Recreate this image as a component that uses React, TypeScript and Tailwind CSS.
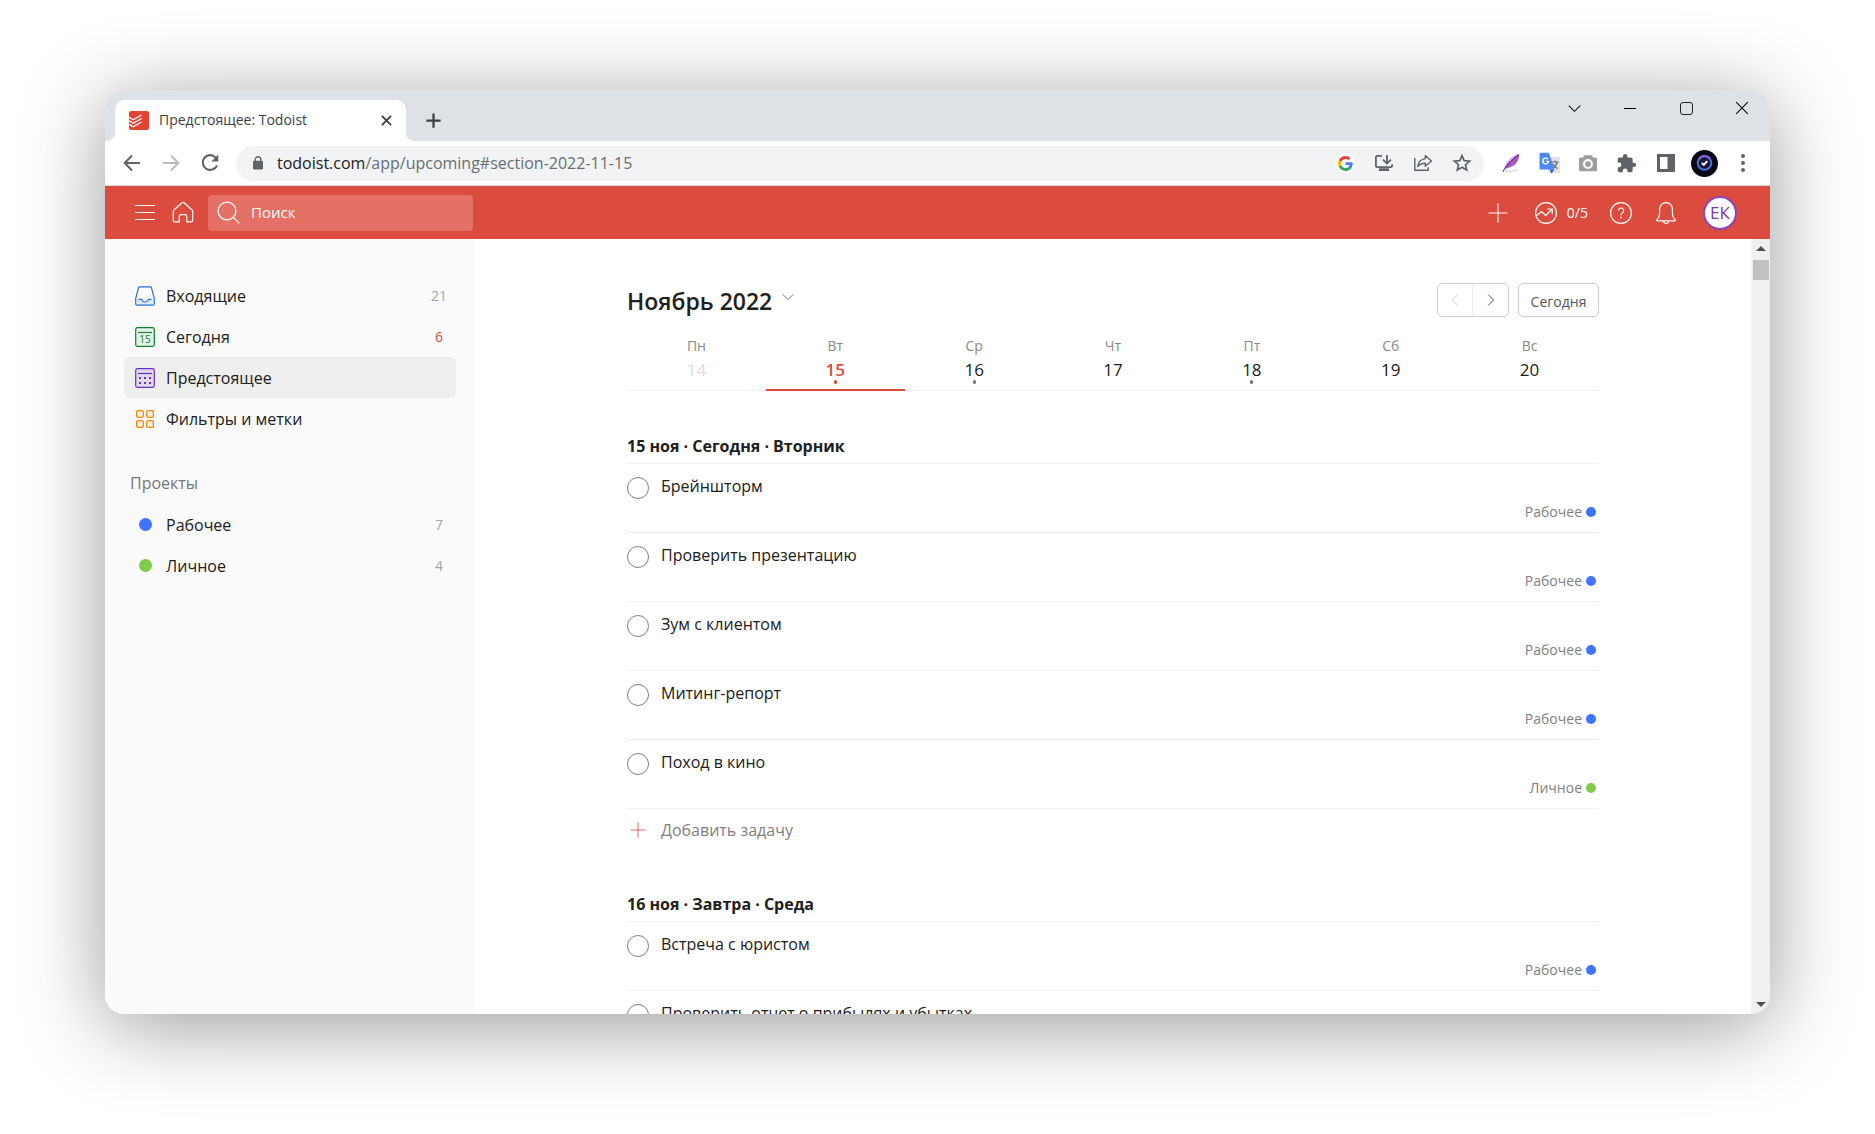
import React from "react";

type IconProps = { className?: string };

const projects = {
  work: { name: "Рабочее", color: "bg-[#4073ff]", count: 7 },
  personal: { name: "Личное", color: "bg-[#7ecc49]", count: 4 },
};

type ProjectKey = keyof typeof projects;
type Task = { title: string; project: ProjectKey };

const days = [
  { name: "Пн", date: 14, state: "past", dot: false },
  { name: "Вт", date: 15, state: "today", dot: true },
  { name: "Ср", date: 16, state: "future", dot: true },
  { name: "Чт", date: 17, state: "future", dot: false },
  { name: "Пт", date: 18, state: "future", dot: true },
  { name: "Сб", date: 19, state: "future", dot: false },
  { name: "Вс", date: 20, state: "future", dot: false },
];

const sections: { title: string; tasks: Task[] }[] = [
  {
    title: "15 ноя · Сегодня · Вторник",
    tasks: [
      { title: "Брейншторм", project: "work" },
      { title: "Проверить презентацию", project: "work" },
      { title: "Зум с клиентом", project: "work" },
      { title: "Митинг-репорт", project: "work" },
      { title: "Поход в кино", project: "personal" },
    ],
  },
  {
    title: "16 ноя · Завтра · Среда",
    tasks: [
      { title: "Встреча с юристом", project: "work" },
      { title: "Проверить отчет о прибылях и убытках", project: "work" },
    ],
  },
];

/* ---------- browser icons ---------- */

function Favicon() {
  return (
    <svg className="size-5 shrink-0" viewBox="0 0 20 20" aria-hidden="true">
      <rect width="20" height="19" rx="2" fill="#e44332" />
      <g fill="none" stroke="#fff" strokeWidth="1.3">
        <path d="M0 6.2 4.3 8.7 12.6 4" />
        <path d="M0 9.7 4.3 12.2 12.6 7.5" />
        <path d="M0 13.2 4.3 15.7 12.6 11" />
      </g>
    </svg>
  );
}

function CrossIcon({ className }: IconProps) {
  return (
    <svg className={className} viewBox="0 0 12 12" fill="none" stroke="currentColor" aria-hidden="true">
      <path d="m1 1 10 10M11 1 1 11" />
    </svg>
  );
}

function BackIcon({ className }: IconProps) {
  return (
    <svg className={className} viewBox="0 0 20 20" fill="none" stroke="currentColor" strokeWidth="2" aria-hidden="true">
      <path d="M18 10H3M10 2.5 2.7 10l7.3 7.5" />
    </svg>
  );
}

function ReloadIcon() {
  return (
    <svg className="size-5" viewBox="0 0 20 20" aria-hidden="true">
      <path d="M15.7 4.6A7.4 7.4 0 1 0 17 12.3" fill="none" stroke="#5f6368" strokeWidth="2.1" />
      <path d="M18.3 1.5v7h-7z" fill="#5f6368" />
    </svg>
  );
}

function LockIcon() {
  return (
    <svg className="h-[14px] w-3 shrink-0" viewBox="0 0 12 14" aria-hidden="true">
      <rect x="1" y="4.8" width="10" height="8.7" rx="1.2" fill="#5f6368" />
      <path d="M3.2 5V3.6a2.8 2.8 0 0 1 5.6 0V5" fill="none" stroke="#5f6368" strokeWidth="1.4" />
    </svg>
  );
}

function GoogleIcon() {
  return (
    <svg className="size-[15px]" viewBox="0 0 48 48" aria-hidden="true">
      <path fill="#EA4335" d="M24 9.5c3.54 0 6.71 1.22 9.21 3.6l6.85-6.85C35.9 2.38 30.47 0 24 0 14.62 0 6.51 5.38 2.56 13.22l7.98 6.19C12.43 13.72 17.74 9.5 24 9.5z" />
      <path fill="#4285F4" d="M46.98 24.55c0-1.57-.15-3.09-.38-4.55H24v9.02h12.94c-.58 2.96-2.26 5.48-4.78 7.18l7.73 6c4.51-4.18 7.09-10.36 7.09-17.65z" />
      <path fill="#FBBC05" d="M10.53 28.59c-.48-1.45-.76-2.99-.76-4.59s.27-3.14.76-4.59l-7.98-6.19C.92 16.46 0 20.12 0 24c0 3.88.92 7.54 2.56 10.78l7.97-6.19z" />
      <path fill="#34A853" d="M24 48c6.48 0 11.93-2.13 15.89-5.81l-7.73-6c-2.15 1.45-4.92 2.3-8.16 2.3-6.26 0-11.57-4.22-13.47-9.91l-7.98 6.19C6.51 42.62 14.62 48 24 48z" />
    </svg>
  );
}

function InstallIcon() {
  return (
    <svg className="size-5" viewBox="0 0 20 20" fill="none" stroke="#5f6368" strokeWidth="1.8" aria-hidden="true">
      <path d="M8 2.9H3.2a1.3 1.3 0 0 0-1.3 1.3v8.6c0 .7.6 1.3 1.3 1.3h13.6c.7 0 1.3-.6 1.3-1.3v-1.5" />
      <path d="M13 2v8M9 6.6l4 4 4-4" />
      <path d="M5 16.6h10" strokeWidth="2.6" />
    </svg>
  );
}

function ShareIcon() {
  return (
    <svg className="size-5" viewBox="0 0 20 20" fill="none" stroke="#5f6368" strokeWidth="1.4" aria-hidden="true">
      <path d="M1.8 5v12.2h13.4v-3" />
      <path d="M12.3 2.6 18.4 8l-6.1 5.3v-3.1c-3.3-.1-5.7 1-7.6 3.4.6-4.5 3.2-7.4 7.6-8z" strokeLinejoin="round" />
    </svg>
  );
}

function StarIcon() {
  return (
    <svg className="size-5" viewBox="0 0 20 20" fill="none" stroke="#5f6368" strokeWidth="1.7" aria-hidden="true">
      <path d="m10 2.6 2.2 5 5.4.5-4.1 3.6 1.2 5.3-4.7-2.8L5.3 17l1.2-5.3-4.1-3.6 5.4-.5z" />
    </svg>
  );
}

function FeatherIcon() {
  return (
    <svg className="size-5" viewBox="0 0 20 20" aria-hidden="true">
      <path d="M5 18.6c4 0 8-.6 11-1.6" stroke="#d4d0d8" strokeWidth="1.2" fill="none" />
      <path d="M18.2.8c.3 4.200-1.400 8-4.200 10.700-2.600 2.400-6.600 2.900-9.400 4.400C5.600 9.400 11.800 4.200 18.200.8z" fill="#a45bc0" />
      <path d="M18.2.8C13 4 8 8.600 5.500 13.600L3.600 16.600C3.900 8.600 10.200 3 18.200.8z" fill="#d9b5e4" />
      <path d="M1.800 18.800C5 12.700 10.400 7 17.600 1.800" stroke="#7a2c9c" strokeWidth="1.1" fill="none" />
    </svg>
  );
}

function TranslateIcon() {
  return (
    <svg className="size-[22px] shrink-0" viewBox="0 0 22 22" aria-hidden="true">
      <rect x="9" y="5" width="12" height="16" rx="1" fill="#e1e3e6" />
      <path d="M12.500 10h7M16 8.500V10M18.300 10c-.6 2.600-2.600 5-4.800 6.500M14 12c1 2 2.600 3.800 4.600 4.600" stroke="#6b7077" strokeWidth="1.2" fill="none" />
      <path d="M10.500 17.500h5l-3 4z" fill="#2f5fc4" />
      <path d="M1.500.8H10l5.500 16.700h-14a1 1 0 0 1-1-1V1.800a1 1 0 0 1 1-1z" fill="#4a8af4" />
      <path d="M9 7.200A2.900 2.900 0 1 0 9.600 9.400H6.900" fill="none" stroke="#fff" strokeWidth="1.4" />
    </svg>
  );
}

function CameraIcon() {
  return (
    <svg className="size-5" viewBox="0 0 20 20" aria-hidden="true">
      <path d="M2.500 4.500H5l1-2.300h8l1 2.300h2.500c.8 0 1.500.6 1.500 1.400v11c0 .8-.7 1.400-1.500 1.400h-15A1.500 1.500 0 0 1 1 16.900v-11c0-.8.7-1.400 1.500-1.400z" fill="#9e9e9e" />
      <circle cx="10" cy="11" r="3.9" fill="none" stroke="#fff" strokeWidth="2.1" />
    </svg>
  );
}

function PuzzleIcon() {
  return (
    <svg className="size-[21px]" viewBox="0 0 24 24" fill="#5f6368" aria-hidden="true">
      <path d="M20.500 11H19V7c0-1.100-.9-2-2-2h-4V3.500a2.500 2.500 0 0 0-5 0V5H4c-1.100 0-2 .9-2 2v3.800h1.500a2.700 2.700 0 0 1 0 5.400H2V20c0 1.100.9 2 2 2h3.800v-1.500a2.700 2.700 0 0 1 5.400 0V22H17c1.100 0 2-.9 2-2v-4h1.500a2.500 2.500 0 0 0 0-5z" />
    </svg>
  );
}

function SidePanelIcon() {
  return (
    <svg className="size-[18px]" viewBox="0 0 18 18" aria-hidden="true">
      <path d="M0 0h18v18H0zM3 3v12h7.500V3z" fill="#5f6368" fillRule="evenodd" />
    </svg>
  );
}

function ProfileIcon() {
  return (
    <svg className="size-[27px] shrink-0" viewBox="0 0 27 27" aria-hidden="true">
      <circle cx="13.500" cy="13.500" r="13.500" fill="#0b0816" />
      <circle cx="13.500" cy="13" r="6.800" fill="#14163a" stroke="#4b6fd6" strokeWidth="2" />
      <path d="M7.500 10a6.800 6.800 0 0 1 11.500-1.500" fill="none" stroke="#8a5fd0" strokeWidth="2" />
      <path d="m10.800 13 2 1.900 3.500-3.700" fill="none" stroke="#fff" strokeWidth="1.9" />
    </svg>
  );
}

/* ---------- app icons ---------- */

function HomeIcon() {
  return (
    <svg className="size-6" viewBox="0 0 24 24" fill="none" stroke="#fff" strokeWidth="1.2" strokeLinejoin="round" aria-hidden="true">
      <path d="M2.300 10.200v9c0 .9.7 1.600 1.600 1.600h4.300v-5.400c0-1 .8-1.800 1.800-1.800h4c1 0 1.800.8 1.800 1.800v5.400h4.300c.9 0 1.600-.7 1.600-1.600v-9c0-.5-.2-.9-.6-1.200L13 1.700a1.500 1.500 0 0 0-2 0L2.900 9c-.4.300-.6.700-.6 1.200z" />
    </svg>
  );
}

function SearchIcon() {
  return (
    <svg className="size-6 shrink-0" viewBox="0 0 24 24" fill="none" stroke="#fff" strokeWidth="1.2" aria-hidden="true">
      <circle cx="11" cy="10" r="8.9" />
      <path d="m17.300 16.300 6 6" />
    </svg>
  );
}

function PlusIcon({ className }: IconProps) {
  return (
    <svg className={className} viewBox="0 0 20 20" fill="none" stroke="currentColor" aria-hidden="true">
      <path d="M10 .5v19M.5 10h19" />
    </svg>
  );
}

function ProductivityIcon() {
  return (
    <svg className="size-6" viewBox="0 0 24 24" fill="none" stroke="#fff" strokeWidth="1.2" aria-hidden="true">
      <circle cx="12" cy="12" r="10.4" />
      <path d="m2.200 14.800 5.300-4.300 4.200 4 6-6" strokeLinejoin="round" />
      <path d="M13.300 8h4.900v4.900" />
    </svg>
  );
}

function HelpIcon() {
  return (
    <svg className="size-6" viewBox="0 0 24 24" fill="none" stroke="#fff" strokeWidth="1.2" aria-hidden="true">
      <circle cx="12" cy="12" r="10.4" />
      <path d="M9.400 9.600a2.600 2.600 0 1 1 4.300 2c-.9.800-1.700 1.300-1.700 2.700" />
      <path d="M12 15.800v1.600" strokeWidth="1.4" />
    </svg>
  );
}

function BellIcon() {
  return (
    <svg className="size-6" viewBox="0 0 24 24" fill="none" stroke="#fff" strokeWidth="1.2" strokeLinejoin="round" aria-hidden="true">
      <path d="M12 1.700c-4 0-6.400 2.900-6.400 6.600v4.200c0 2.900-1 4.600-2.700 6.200-.5.500-.3 1.200.4 1.200h17.400c.7 0 .9-.7.4-1.200-1.700-1.600-2.700-3.300-2.700-6.200V8.300c0-3.700-2.400-6.600-6.400-6.600z" />
      <path d="M9.400 20c.1 1.600 1.200 2.500 2.600 2.500s2.500-.9 2.600-2.500" />
    </svg>
  );
}

function InboxIcon() {
  return (
    <svg className="size-5" viewBox="0 0 20 20" fill="none" stroke="#246fe0" strokeWidth="1.2" strokeLinejoin="round" aria-hidden="true">
      <path d="M1.500 13.400h4.400c.4 1.700 2 2.700 4.100 2.700s3.700-1 4.100-2.700h4.400v4.500a1 1 0 0 1-1 1h-15a1 1 0 0 1-1-1z" fill="#246fe0" fillOpacity=".12" stroke="none" />
      <path d="M4.900.8h10.200c.7 0 1.200.4 1.400 1l2.800 10.600v5.300c0 .9-.6 1.500-1.500 1.500H2.200c-.9 0-1.500-.6-1.500-1.500v-5.300L3.500 1.800c.2-.6.700-1 1.400-1z" />
      <path d="M3.500 13.400h3.200c.5 1.700 1.700 2.600 3.300 2.600s2.800-.9 3.300-2.600h3.200" />
    </svg>
  );
}

function TodayIcon() {
  return (
    <svg className="size-5" viewBox="0 0 20 20" fill="none" stroke="#058527" strokeWidth="1.2" aria-hidden="true">
      <rect x=".7" y=".7" width="18.6" height="18.6" rx="1.8" fill="#058527" fillOpacity=".08" />
      <path d="M3 5.500h14" />
      <text x="10" y="16" textAnchor="middle" fontSize="10" fill="#058527" stroke="none">
        15
      </text>
    </svg>
  );
}

function UpcomingIcon() {
  return (
    <svg className="size-5" viewBox="0 0 20 20" fill="none" stroke="#692fc2" strokeWidth="1.2" aria-hidden="true">
      <rect x=".7" y=".7" width="18.6" height="18.6" rx="1.8" fill="#692fc2" fillOpacity=".1" />
      <path d="M3 5.500h14" />
      <path d="M4 10h2M9 10h2M14 10h2M4 15h2M9 15h2M14 15h2" strokeWidth="2" />
    </svg>
  );
}

function FiltersIcon() {
  return (
    <svg className="size-5" viewBox="0 0 20 20" stroke="#eb8909" strokeWidth="1.2" fill="#eb8909" fillOpacity=".12" aria-hidden="true">
      <rect x="1.600" y="1.600" width="6.800" height="6.800" rx="1.600" />
      <rect x="11.600" y="1.600" width="6.800" height="6.800" rx="1.600" />
      <rect x="1.600" y="11.600" width="6.800" height="6.800" rx="1.600" />
      <rect x="11.600" y="11.600" width="6.800" height="6.800" rx="1.600" />
    </svg>
  );
}

function Chevron({ className }: IconProps) {
  return (
    <svg className={className} viewBox="0 0 12 12" fill="none" stroke="currentColor" aria-hidden="true">
      <path d="m.7 3.300 5.300 5.300 5.300-5.300" />
    </svg>
  );
}

/* ---------- browser chrome ---------- */

function TabStrip() {
  return (
    <div className="flex h-[51px] shrink-0 items-start justify-between bg-[#dee1e6]">
      <div className="flex items-end pt-[10px] pl-[2px]">
        <span className="size-2 bg-white">
          <span className="block size-2 rounded-br-full bg-[#dee1e6]" />
        </span>
        <div className="flex h-[41px] w-[291px] items-center rounded-t-[10px] bg-white pr-3 pl-[14px]">
          <Favicon />
          <span className="mb-[2px] ml-[10px] flex-1 text-[14px] text-[#3c4043]">Предстоящее: Todoist</span>
          <button aria-label="Закрыть вкладку" className="flex size-4 items-center justify-center text-[#3c4043]">
            <CrossIcon className="size-[11px] stroke-2" />
          </button>
        </div>
        <span className="size-2 bg-white">
          <span className="block size-2 rounded-bl-full bg-[#dee1e6]" />
        </span>
        <button aria-label="Новая вкладка" className="ml-3 flex h-[41px] items-center text-[#3c4043]">
          <PlusIcon className="size-[15px] stroke-3" />
        </button>
      </div>
      <div className="flex h-9 items-center text-[#111]">
        <button aria-label="Поиск вкладок" className="flex w-14 justify-center">
          <Chevron className="size-[13px]" />
        </button>
        <button aria-label="Свернуть" className="flex w-14 justify-center">
          <span className="h-px w-3 bg-black" />
        </button>
        <button aria-label="Развернуть" className="flex w-14 justify-center">
          <span className="size-[13px] rounded-[3px] border border-[#222]" />
        </button>
        <button aria-label="Закрыть" className="flex w-14 justify-center">
          <CrossIcon className="size-[14px]" />
        </button>
      </div>
    </div>
  );
}

function AddressBar() {
  return (
    <div className="flex h-[45px] shrink-0 items-center border-b border-[#d9dbdf] bg-white pr-[15px] pl-[17px]">
      <div className="flex w-[114px] gap-[19px]">
        <button aria-label="Назад" className="text-[#5f6368]">
          <BackIcon className="size-5" />
        </button>
        <button aria-label="Вперёд" className="text-[#babcbe]">
          <BackIcon className="size-5 rotate-180" />
        </button>
        <button aria-label="Обновить">
          <ReloadIcon />
        </button>
      </div>
      <div className="flex h-[35px] flex-1 items-center rounded-full bg-[#f1f3f4] pr-[10px] pl-4">
        <LockIcon />
        <span className="ml-[13px] flex-1 text-[16px] text-[#6a6e73]">
          <span className="text-[#202124]">todoist.com</span>/app/upcoming#section-2022-11-15
        </span>
        <div className="flex items-center gap-[15px]">
          <button aria-label="Google" className="flex size-5 items-center justify-center rounded-full bg-white mx-[2px]">
            <GoogleIcon />
          </button>
          <button aria-label="Установить" className="flex size-6 items-center justify-center">
            <InstallIcon />
          </button>
          <button aria-label="Поделиться" className="flex size-6 items-center justify-center">
            <ShareIcon />
          </button>
          <button aria-label="В закладки" className="flex size-6 items-center justify-center">
            <StarIcon />
          </button>
        </div>
      </div>
      <div className="ml-[15px] flex w-[256px] items-center justify-between">
        <button aria-label="Перо" className="flex w-6 justify-center">
          <FeatherIcon />
        </button>
        <button aria-label="Переводчик" className="flex w-6 justify-center">
          <TranslateIcon />
        </button>
        <button aria-label="Снимок" className="flex w-6 justify-center">
          <CameraIcon />
        </button>
        <button aria-label="Расширения" className="flex w-6 justify-center">
          <PuzzleIcon />
        </button>
        <button aria-label="Боковая панель" className="flex w-6 justify-center">
          <SidePanelIcon />
        </button>
        <button aria-label="Профиль" className="flex w-6 justify-center">
          <ProfileIcon />
        </button>
        <button aria-label="Меню браузера" className="flex w-6 flex-col items-center gap-[3px]">
          <span className="size-1 rounded-full bg-[#5f6368]" />
          <span className="size-1 rounded-full bg-[#5f6368]" />
          <span className="size-1 rounded-full bg-[#5f6368]" />
        </button>
      </div>
    </div>
  );
}

/* ---------- application ---------- */

function AppHeader() {
  return (
    <header className="flex h-[53px] shrink-0 items-center justify-between bg-[#db4c3f] pr-[33px] pl-[30px] text-white">
      <div className="flex items-center">
        <button aria-label="Меню" className="flex w-5 flex-col gap-[6px]">
          <span className="h-px bg-white" />
          <span className="h-px bg-white" />
          <span className="h-px bg-white" />
        </button>
        <button aria-label="Главная" className="ml-4">
          <HomeIcon />
        </button>
        <label className="ml-[13px] flex h-9 w-[265px] items-center rounded-[4px] bg-[#e47066] pl-2">
          <SearchIcon />
          <input
            type="text"
            aria-label="Поиск"
            placeholder="Поиск"
            className="ml-[11px] w-full bg-transparent text-[15px] outline-none placeholder:text-white"
          />
        </label>
      </div>
      <div className="flex items-center">
        <button aria-label="Добавить задачу">
          <PlusIcon className="size-5" />
        </button>
        <button aria-label="Продуктивность" className="ml-[26px] flex items-center gap-[9px] text-[14px]">
          <ProductivityIcon />
          0/5
        </button>
        <button aria-label="Справка" className="ml-[21px]">
          <HelpIcon />
        </button>
        <button aria-label="Уведомления" className="ml-[21px]">
          <BellIcon />
        </button>
        <button className="ml-[25px] flex size-[34px] items-center justify-center rounded-full border-2 border-[#8a45b5] bg-white text-[17px] text-[#8236ab]">
          ЕК
        </button>
      </div>
    </header>
  );
}

type NavItemProps = {
  icon: React.ReactNode;
  label: string;
  count?: number;
  active?: boolean;
  countClass?: string;
};

function NavItem({ icon, label, count, active, countClass = "text-[#a5a5a5]" }: NavItemProps) {
  return (
    <li>
      <a
        href="#"
        className={`flex h-[41px] items-center rounded-[5px] pr-[7px] pl-[11px] ${active ? "bg-[#eeeeee]" : ""}`}
      >
        <span className="flex w-5 justify-center">{icon}</span>
        <span className="ml-[11px] flex-1 text-[16px]">{label}</span>
        {count !== undefined && <span className={`w-5 text-center text-[14px] ${countClass}`}>{count}</span>}
      </a>
    </li>
  );
}

function Sidebar() {
  return (
    <nav className="w-[370px] shrink-0 bg-[#fafafa] px-[19px] pt-9">
      <ul>
        <NavItem icon={<InboxIcon />} label="Входящие" count={21} />
        <NavItem icon={<TodayIcon />} label="Сегодня" count={6} countClass="text-[#db4c3f]" />
        <NavItem icon={<UpcomingIcon />} label="Предстоящее" active />
        <NavItem icon={<FiltersIcon />} label="Фильтры и метки" />
      </ul>
      <h2 className="mt-8 pl-[6px] text-[16px] leading-6 text-[#777]">Проекты</h2>
      <ul className="mt-[9px]">
        {Object.values(projects).map((p) => (
          <NavItem
            key={p.name}
            icon={<span className={`size-[13px] rounded-full ${p.color}`} />}
            label={p.name}
            count={p.count}
          />
        ))}
      </ul>
    </nav>
  );
}

function Week() {
  return (
    <div className="mt-[19px] grid grid-cols-7 border-b border-[#eee]">
      {days.map((d) => (
        <button
          key={d.date}
          className={`-mb-px flex h-[55px] flex-col items-center border-b-2 ${
            d.state === "today" ? "border-[#db4c3f]" : "border-transparent"
          }`}
        >
          <span className="text-[14px] leading-5 text-[#888]">{d.name}</span>
          <span
            className={`mt-[2px] text-[17px] leading-6 ${
              d.state === "today"
                ? "font-semibold text-[#db4c3f]"
                : d.state === "past"
                  ? "text-[#ddd]"
                  : "text-[#202020]"
            }`}
          >
            {d.date}
          </span>
          {d.dot && (
            <span
              className={`-mt-[2px] h-1 w-[3px] rounded-full ${d.state === "today" ? "bg-[#db4c3f]" : "bg-[#777]"}`}
            />
          )}
        </button>
      ))}
    </div>
  );
}

function TaskRow({ task, id }: { task: Task; id: string }) {
  const project = projects[task.project];
  return (
    <li className="flex h-[69px] flex-col border-b border-[#eee] pt-3">
      <div className="flex h-6 items-center">
        <input
          id={id}
          type="checkbox"
          className="size-[22px] appearance-none rounded-full border border-[#808080] checked:bg-[#808080]"
        />
        <label htmlFor={id} className="ml-3 self-start text-[16px] leading-5">
          {task.title}
        </label>
      </div>
      <a href="#" className="mt-[2px] flex h-5 items-center self-end pr-[3px] text-[14px] leading-5 text-[#808080]">
        {project.name}
        <span className={`ml-1 size-[10px] rounded-full ${project.color}`} />
      </a>
    </li>
  );
}

function Main() {
  return (
    <main className="min-w-0 flex-1 overflow-hidden pt-[44px]">
      <div className="mx-auto w-full max-w-[972px]">
        <div className="flex h-[34px] items-center justify-between">
          <h1>
            <button className="flex items-center pt-[2px] text-[23px] font-semibold text-[#202020]">
              Ноябрь 2022
              <Chevron className="mb-2 ml-[10px] size-3 text-[#777]" />
            </button>
          </h1>
          <div className="flex gap-[9px]">
            <div className="flex h-[34px] w-[72px] rounded-[5px] border border-[#ccc]">
              <button aria-label="Предыдущая неделя" className="flex w-[35px] items-center justify-center border-r border-[#eee] text-[#ccc]">
                <Chevron className="size-3 rotate-90" />
              </button>
              <button aria-label="Следующая неделя" className="flex flex-1 items-center justify-center text-[#555]">
                <Chevron className="size-3 -rotate-90" />
              </button>
            </div>
            <button className="h-[34px] w-[81px] rounded-[5px] border border-[#ccc] pt-[2px] text-[14px] text-[#555]">Сегодня</button>
          </div>
        </div>
        <Week />
        {sections.map((s, i) => (
          <section key={s.title} className={i === 0 ? "mt-[41px]" : "mt-[46px]"}>
            <h2 className="h-8 border-b border-[#eee] text-[16px] leading-7 font-bold text-[#202020]">{s.title}</h2>
            <ul>
              {s.tasks.map((t, j) => (
                <TaskRow key={t.title} task={t} id={`task-${i}-${j}`} />
              ))}
            </ul>
            <button className="mt-[7px] mb-px flex h-7 items-center text-[16px] text-[#808080]">
              <PlusIcon className="mx-[3px] size-4 text-[#db4c3f]" />
              <span className="ml-3">Добавить задачу</span>
            </button>
          </section>
        ))}
      </div>
    </main>
  );
}

function Scrollbar() {
  return (
    <div className="flex w-[19px] shrink-0 flex-col items-center justify-between bg-[#f0f0f0] py-[7px]">
      <div className="flex flex-col items-center gap-[9px]">
        <svg className="h-[5px] w-[10px]" viewBox="0 0 10 5" fill="#505050" aria-hidden="true">
          <path d="M5 0 10 5H0z" />
        </svg>
        <div className="h-5 w-4 bg-[#c1c1c1]" />
      </div>
      <svg className="h-[5px] w-[10px]" viewBox="0 0 10 5" fill="#505050" aria-hidden="true">
        <path d="M0 0h10L5 5z" />
      </svg>
    </div>
  );
}

export default function App() {
  return (
    <div className="flex h-screen flex-col bg-white px-[105px] pt-[90px] pb-[120px] font-['Open_Sans','Noto_Sans',sans-serif] text-[#202020]">
      <div className="flex min-h-0 flex-1 flex-col overflow-hidden rounded-[19px] bg-white shadow-[0_12px_84px_rgba(0,0,0,0.4)]">
        <TabStrip />
        <AddressBar />
        <AppHeader />
        <div className="flex min-h-0 flex-1">
          <Sidebar />
          <Main />
          <Scrollbar />
        </div>
      </div>
    </div>
  );
}
